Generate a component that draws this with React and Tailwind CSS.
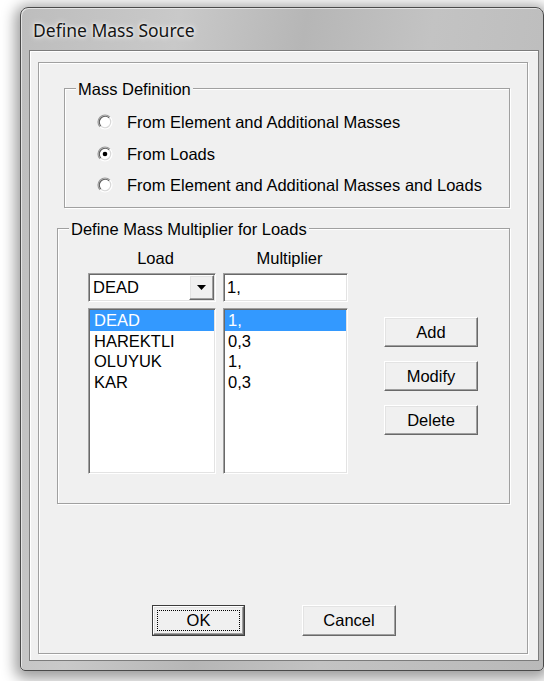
import React from "react";

const loads = [
  { name: "DEAD", factor: "1," },
  { name: "HAREKTLI", factor: "0,3" },
  { name: "OLUYUK", factor: "1," },
  { name: "KAR", factor: "0,3" },
];

const options = [
  { label: "From Element and Additional Masses", checked: false },
  { label: "From Loads", checked: true },
  { label: "From Element and Additional Masses and Loads", checked: false },
];

// classic 3D edges
const sunken =
  "border border-t-[#a0a0a0] border-l-[#a0a0a0] border-r-white border-b-white shadow-[inset_1px_1px_0_#696969,inset_-1px_-1px_0_#e3e3e3]";
const raised =
  "border border-t-white border-l-white border-r-[#696969] border-b-[#696969] shadow-[inset_-1px_-1px_0_#a0a0a0,inset_1px_1px_0_#e3e3e3]";
const etched = "border border-[#a0a0a0] shadow-[inset_1px_1px_0_#fff,1px_1px_0_#fff]";

export default function App() {
  return (
    <div className="h-[681px] w-[544px] overflow-hidden bg-white pl-[20px] pt-[7px] font-['Liberation_Sans',Arial,sans-serif] text-[16.5px] text-black">
      <div className="flex h-[664px] w-[524px] flex-col rounded-t-[8px] rounded-b-[5px] border border-[#4a4a4a] bg-[linear-gradient(100deg,#bdbdbd_0%,#c9c9c9_25%,#b6b6b6_45%,#c3c3c3_65%,#b9b9b9_100%)] shadow-[0_3px_14px_5px_rgba(0,0,0,0.38),inset_1px_1px_0_rgba(255,255,255,0.55)]">
        <div className="flex h-[42px] shrink-0 items-center pl-[12px] pt-[2px] font-['Noto_Sans',sans-serif] text-[17.5px] text-[#151515] [text-shadow:0_0_6px_#fff,0_0_3px_#fff]">
          Define Mass Source
        </div>
        <div className="ml-[8px] h-[611px] w-[510px] border border-[#7c7c7c] bg-[#f0f0f0] pl-[8px] pt-[11px] shadow-[inset_1px_1px_0_#fff]">
          <div className={`h-[592px] w-[490px] ${etched}`}>
            <MassDefinition />
            <MultiplierGroup />
            <div className="ml-[113px] mt-[101px] flex gap-[57px]">
              <DefaultButton label="OK" />
              <button className={`h-[31px] w-[94px] bg-[#f0f0f0] ${raised}`}>Cancel</button>
            </div>
          </div>
        </div>
      </div>
    </div>
  );
}

function GroupBox({ title, className, children }) {
  return (
    <div className={`relative ${etched} ${className}`}>
      <span className="absolute -top-[10px] left-[11px] bg-[#f0f0f0] px-[2px] leading-[20px]">{title}</span>
      {children}
    </div>
  );
}

function MassDefinition() {
  return (
    <GroupBox title="Mass Definition" className="ml-[25px] mt-[25px] h-[120px] w-[446px]">
      <div className="flex flex-col gap-[11.5px] pl-[32px] pt-[23px]">
        {options.map((opt) => (
          <label key={opt.label} className="flex h-[20px] items-center gap-[14px] leading-[20px]">
            <Radio checked={opt.checked} />
            <span>{opt.label}</span>
          </label>
        ))}
      </div>
    </GroupBox>
  );
}

function Radio({ checked }) {
  return (
    <svg width="16" height="16" viewBox="0 0 16 16" className="shrink-0">
      <circle cx="8" cy="8" r="6.5" fill="#fff" />
      <path d="M3.05 12.95 A7 7 0 0 1 12.95 3.05" fill="none" stroke="#9a9a9a" strokeWidth="1.2" />
      <path d="M3.9 12.1 A5.8 5.8 0 0 1 12.1 3.9" fill="none" stroke="#5f5f5f" strokeWidth="1.1" />
      <path d="M12.95 3.05 A7 7 0 0 1 3.05 12.95" fill="none" stroke="#ffffff" strokeWidth="1.2" />
      <path d="M12.1 3.9 A5.8 5.8 0 0 1 3.9 12.1" fill="none" stroke="#d8d8d8" strokeWidth="1.1" />
      {checked && <circle cx="8" cy="8" r="2.3" fill="#000" />}
    </svg>
  );
}

function MultiplierGroup() {
  return (
    <GroupBox title="Define Mass Multiplier for Loads" className="ml-[18px] mt-[20px] h-[276px] w-[453px]">
      <div className="flex pl-[30px] pt-[19px]">
        <div className="flex w-[128px] flex-col">
          <div className="h-[20px] pl-[7px] text-center leading-[20px]">Load</div>
          <div className={`mt-[5px] flex h-[29px] items-center bg-white ${sunken}`}>
            <span className="flex-1 pl-[4px]">DEAD</span>
            <div className={`mr-[1px] flex h-[25px] w-[25px] items-center justify-center bg-[#f0f0f0] ${raised}`}>
              <svg width="9" height="5" viewBox="0 0 9 5">
                <polygon points="0,0 9,0 4.5,5" fill="#000" />
              </svg>
            </div>
          </div>
          <ListBox items={loads.map((l) => l.name)} pad="pl-[4px]" />
        </div>
        <div className="ml-[7px] flex w-[125px] flex-col">
          <div className="h-[20px] pl-[8px] text-center leading-[20px]">Multiplier</div>
          <div className={`mt-[5px] flex h-[29px] items-center bg-white pl-[3px] ${sunken}`}>1,</div>
          <ListBox items={loads.map((l) => l.factor)} pad="pl-[3px]" />
        </div>
        <div className="ml-[36px] flex flex-col gap-[14px] pt-[69px]">
          {["Add", "Modify", "Delete"].map((b) => (
            <button key={b} className={`h-[30px] w-[94px] bg-[#f0f0f0] ${raised}`}>
              {b}
            </button>
          ))}
        </div>
      </div>
    </GroupBox>
  );
}

function ListBox({ items, pad }) {
  return (
    <div className={`mt-[6px] h-[166px] bg-white ${sunken}`}>
      <div className="p-[1px]">
        {items.map((item, i) => (
          <div
            key={i}
            className={`h-[20.5px] leading-[20.5px] ${pad} ${i === 0 ? "bg-[#3399ff] text-white" : ""}`}
          >
            {item}
          </div>
        ))}
      </div>
    </div>
  );
}

function DefaultButton({ label }) {
  return (
    <div className="h-[31px] w-[93px] border border-[#3c3c3c]">
      <div className={`flex h-full w-full bg-[#f0f0f0] p-[3px] ${raised}`}>
        <div className="flex flex-1 items-center justify-center border border-dotted border-black">{label}</div>
      </div>
    </div>
  );
}
